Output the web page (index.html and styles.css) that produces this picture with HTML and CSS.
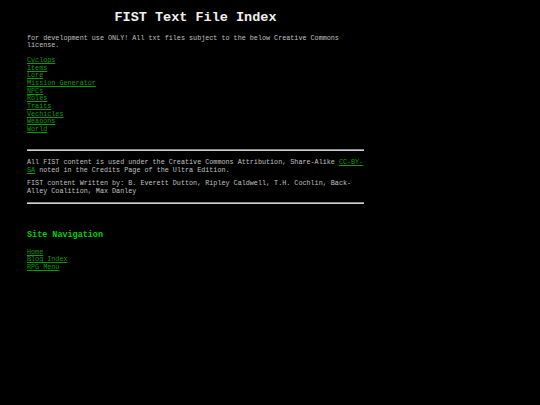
FILE: index.html
```html
<!DOCTYPE html>
<html>
<head>
<meta charset="utf-8">
<title>FIST Text File Index</title>
<link rel="stylesheet" href="styles.css">
</head>
<body>
<div class="page">
  <h1 class="title">FIST Text File Index</h1>
  <p class="intro">for development use ONLY! All txt files subject to the below Creative Commons license.</p>
  <div class="links">
    <a href="#">Cyclops</a>
    <a href="#">Items</a>
    <a href="#">Lore</a>
    <a href="#">Mission Generator</a>
    <a href="#">NPCs</a>
    <a href="#">Roles</a>
    <a href="#">Traits</a>
    <a href="#">Vechicles</a>
    <a href="#">Weapons</a>
    <a href="#">World</a>
  </div>
  <hr class="rule rule-top">
  <p class="text credit">All FIST content is used under the Creative Commons Attribution, Share-Alike <a href="#">CC-BY-SA</a> noted in the Credits Page of the Ultra Edition.</p>
  <p class="text authors">FIST content Written by: B. Everett Dutton, Ripley Caldwell, T.H. Cochlin, Back-Alley Coalition, Max Danley</p>
  <hr class="rule rule-bottom">
  <h3 class="nav-title">Site Navigation</h3>
  <div class="links">
    <a href="#">Home</a>
    <a href="#">Blog Index</a>
    <a href="#">RPG Menu</a>
  </div>
</div>
</body>
</html>
```

FILE: styles.css
```css
html, body {
  margin: 0;
  padding: 0;
  background: #000;
}
body {
  font-family: "Liberation Mono", "Courier New", monospace;
  font-size: 6.75px;
  line-height: 7.65px;
  color: #c0c0c0;
}
.page {
  width: 337px;
  margin-left: 27px;
  padding-top: 9.5px;
}
.title {
  margin: 0 0 9.8px;
  font-size: 13.5px;
  line-height: 15.3px;
  font-weight: bold;
  text-align: center;
  color: #f0f0f0;
}
.intro {
  margin: 0 0 7.2px;
}
.text {
  margin: 0;
}
.links {
  display: flex;
  flex-direction: column;
  align-items: flex-start;
}
a {
  color: #0b9a0b;
  text-decoration: underline;
}
.rule {
  height: 0;
  border: 0;
  border-top: 1px solid #8a8a8a;
  border-bottom: 1px solid #d0d0d0;
}
.rule-top {
  margin: 15.6px 0 8.1px;
}
.authors {
  margin-top: 5.8px;
}
.rule-bottom {
  margin: 5.8px 0 0;
}
.nav-title {
  margin: 27px 0 8.4px;
  font-size: 8.45px;
  line-height: 9.6px;
  font-weight: bold;
  color: #00d000;
}
```
